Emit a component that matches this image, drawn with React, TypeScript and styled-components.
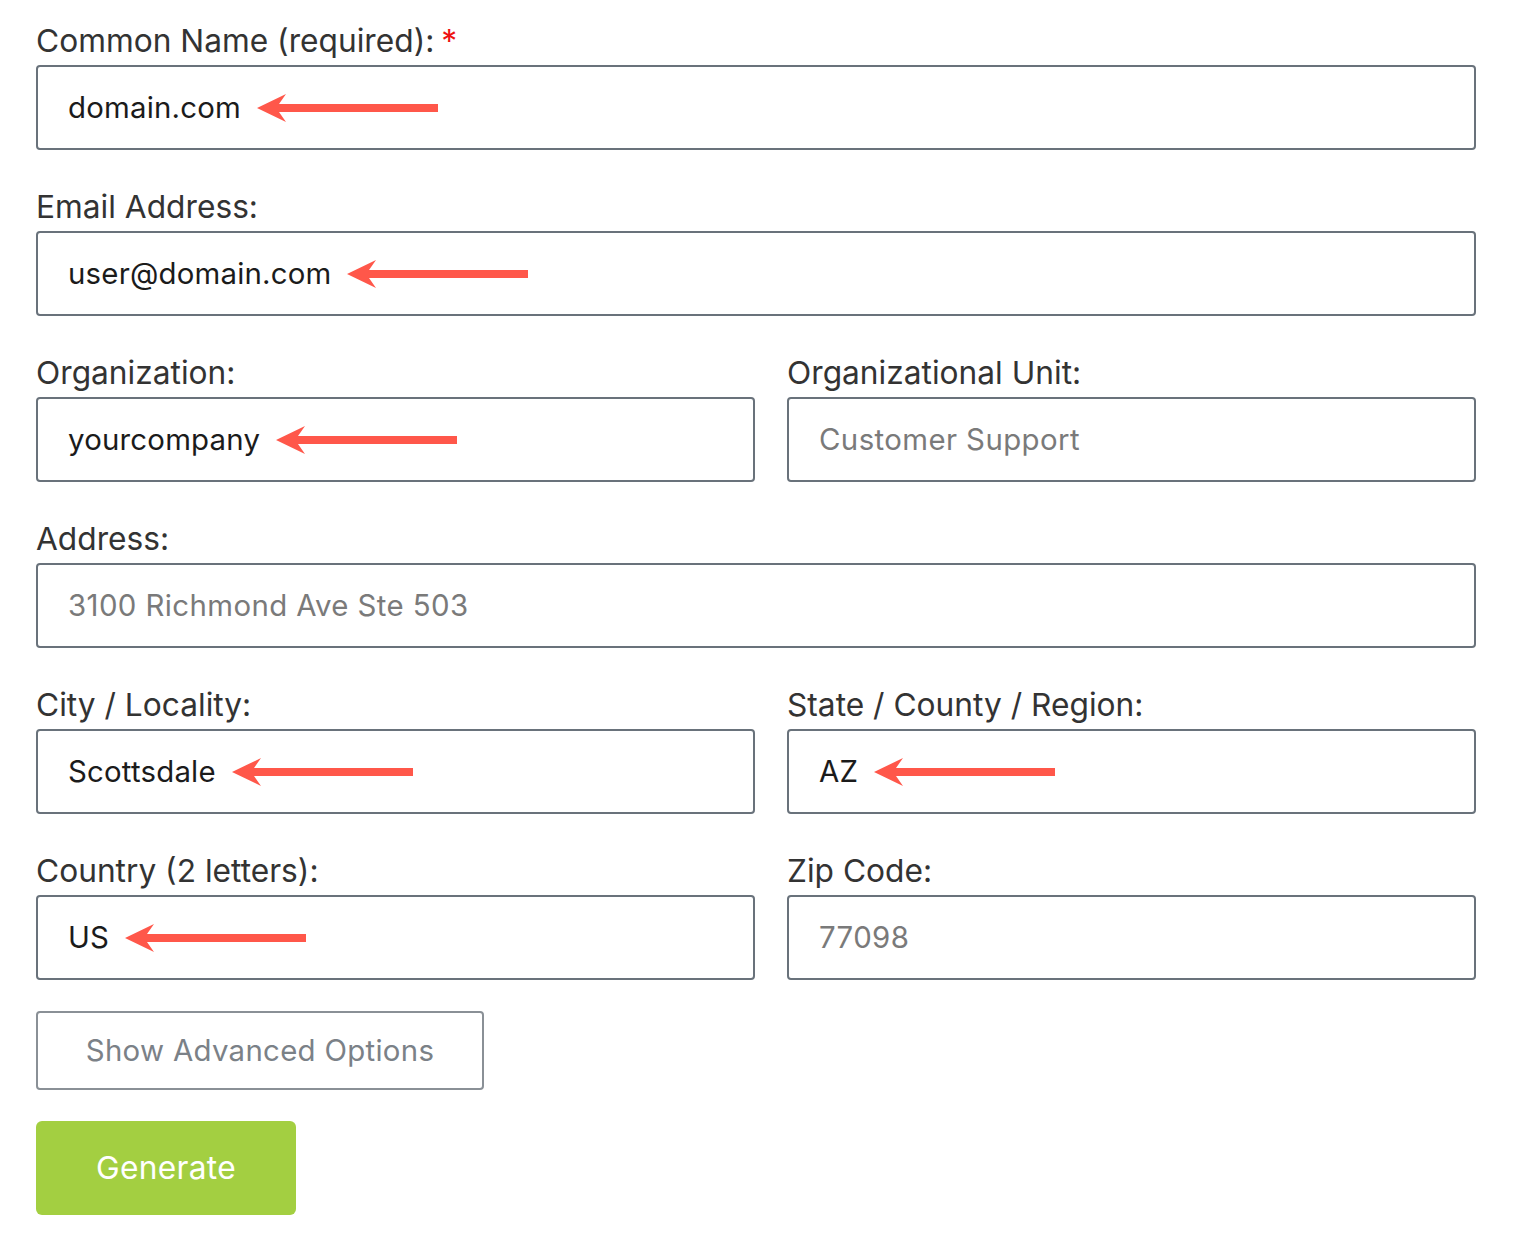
import React from "react";
import styled, { createGlobalStyle } from "styled-components";

const Global = createGlobalStyle`
  html, body { margin: 0; padding: 0; background: #ffffff; }
  body { font-family: Inter, "Noto Sans", sans-serif; }
  * { box-sizing: border-box; }
`;

const Page = styled.div`
  width: 1514px;
  padding: 21px 38px 0 36px;
`;

const Form = styled.form`
  width: 1440px;
  display: flex;
  flex-direction: column;
`;

const Row = styled.div<{ $split?: boolean }>`
  display: grid;
  grid-template-columns: ${(p) => (p.$split ? "719px 1fr" : "1fr")};
  column-gap: 32px;
  margin-bottom: 37px;
`;

const Field = styled.div`
  display: flex;
  flex-direction: column;
`;

const Label = styled.label`
  font-size: 31.7px;
  line-height: 40px;
  color: #333333;
  margin-bottom: 4px;
  letter-spacing: 0;
`;

const Star = styled.span`
  color: #ee1111;
  margin-left: 7px;
`;

const InputBox = styled.div`
  height: 85px;
  border: 2px solid #69727b;
  border-radius: 4px;
  padding: 0 30px;
  display: flex;
  align-items: center;
  gap: 16px;
  background: #fff;
`;

const Value = styled.span<{ $placeholder?: boolean }>`
  font-size: 29.4px;
  color: ${(p) => (p.$placeholder ? "#7a7a7a" : "#1b1b1b")};
  letter-spacing: ${(p) => (p.$placeholder ? "0.4px" : "0.2px")};
`;

const ArrowSvg = styled.svg`
  width: 181px;
  height: 30px;
  flex: none;
`;

const Arrow = () => (
  <ArrowSvg viewBox="0 0 181 30">
    <polygon
      points="0,15 29,1 22,11 181,11 181,19 22,19 29,29"
      fill="#ff574a"
    />
  </ArrowSvg>
);

const Buttons = styled.div`
  display: flex;
  flex-direction: column;
  align-items: flex-start;
  gap: 31px;
  margin-top: -6px;
`;

const OutlineButton = styled.button`
  width: 448px;
  height: 79px;
  border: 2px solid #8a9096;
  border-radius: 4px;
  background: #fff;
  font-family: inherit;
  font-size: 29.4px;
  color: #7b8187;
  letter-spacing: 0.3px;
`;

const PrimaryButton = styled.button`
  width: 260px;
  height: 94px;
  border: none;
  border-radius: 6px;
  background: #a3cf41;
  font-family: inherit;
  font-size: 31.7px;
  color: #ffffff;
  letter-spacing: 0.3px;
  padding-bottom: 2px;
`;

type F = { label: string; value: string; placeholder?: boolean; arrow?: boolean; required?: boolean };

const FieldView = ({ label, value, placeholder, arrow, required }: F) => (
  <Field>
    <Label>
      {label}
      {required && <Star>*</Star>}
    </Label>
    <InputBox>
      <Value $placeholder={placeholder}>{value}</Value>
      {arrow && <Arrow />}
    </InputBox>
  </Field>
);

export default function App() {
  return (
    <Page>
      <Global />
      <Form onSubmit={(e) => e.preventDefault()}>
        <Row>
          <FieldView label="Common Name (required):" value="domain.com" arrow required />
        </Row>
        <Row>
          <FieldView label="Email Address:" value="user@domain.com" arrow />
        </Row>
        <Row $split>
          <FieldView label="Organization:" value="yourcompany" arrow />
          <FieldView label="Organizational Unit:" value="Customer Support" placeholder />
        </Row>
        <Row>
          <FieldView label="Address:" value="3100 Richmond Ave Ste 503" placeholder />
        </Row>
        <Row $split>
          <FieldView label="City / Locality:" value="Scottsdale" arrow />
          <FieldView label="State / County / Region:" value="AZ" arrow />
        </Row>
        <Row $split>
          <FieldView label="Country (2 letters):" value="US" arrow />
          <FieldView label="Zip Code:" value="77098" placeholder />
        </Row>
        <Buttons>
          <OutlineButton type="button">Show Advanced Options</OutlineButton>
          <PrimaryButton type="submit">Generate</PrimaryButton>
        </Buttons>
      </Form>
    </Page>
  );
}
